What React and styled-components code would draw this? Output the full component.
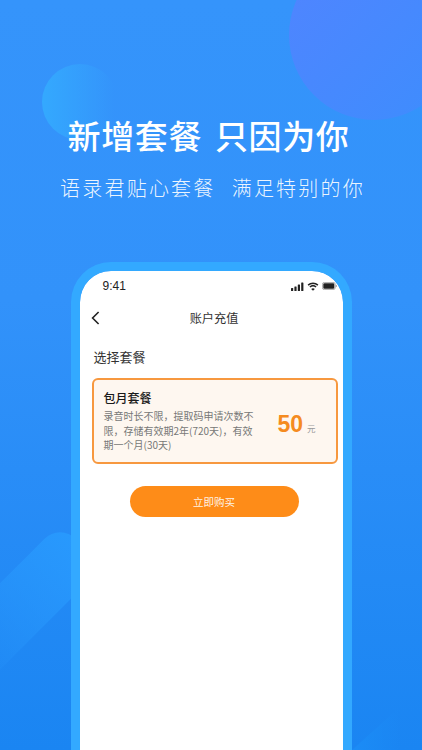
import React from 'react';
import styled, { createGlobalStyle } from 'styled-components';

const GlobalStyle = createGlobalStyle`
  html, body {
    margin: 0;
    padding: 0;
  }
  body {
    font-family: "Noto Sans CJK SC", "Liberation Sans", sans-serif;
  }
`;

const App = () => {
  return (
    <Page>
      <GlobalStyle />
      {/* background shapes */}
      <BigCircle />
      <SmallCircle />
      <LeftBand />
      <RightBand />

      <Title>新增套餐&nbsp;只因为你</Title>
      <Subtitle>语录君贴心套餐&nbsp;&nbsp;满足特别的你</Subtitle>

      <Phone>
        <StatusBar>
          <Time>9:41</Time>
          <StatusIcons>
            <svg width="13" height="9" viewBox="0 0 13 9">
              <rect x="0" y="6" width="2.2" height="3" rx="0.5" fill="#222" />
              <rect x="3.4" y="4.4" width="2.2" height="4.6" rx="0.5" fill="#222" />
              <rect x="6.8" y="2.4" width="2.2" height="6.6" rx="0.5" fill="#222" />
              <rect x="10.2" y="0.4" width="2.2" height="8.6" rx="0.5" fill="#222" />
            </svg>
            <svg width="12" height="9" viewBox="0 0 11 9" fill="none" stroke="#222" strokeWidth="1.5">
              <path d="M0.6 3.1C3.4 0.5 7.6 0.5 10.4 3.1" />
              <path d="M2.4 5C4.2 3.4 6.8 3.4 8.6 5" />
              <path d="M5.5 8.8L3.7 6.9C4.8 6 6.2 6 7.3 6.9Z" fill="#222" stroke="none" />
            </svg>
            <svg width="15" height="8" viewBox="0 0 15 8">
              <rect x="0.4" y="0.4" width="12.8" height="7.2" rx="2" fill="none" stroke="#888" strokeWidth="0.7" />
              <rect x="1.3" y="1.3" width="11" height="5.4" rx="1.2" fill="#222" />
              <path d="M13.9 2.8C14.5 3 14.8 3.5 14.8 4C14.8 4.5 14.5 5 13.9 5.2Z" fill="#888" />
            </svg>
          </StatusIcons>
        </StatusBar>

        <NavBar>
          <BackIcon width="9" height="14" viewBox="0 0 9 14" fill="none">
            <path d="M7.6 1L1.6 7L7.6 13" stroke="#222" strokeWidth="1.6" />
          </BackIcon>
          <NavTitle>账户充值</NavTitle>
        </NavBar>

        <SectionLabel>选择套餐</SectionLabel>

        <PlanCard>
          <PlanInfo>
            <PlanName>包月套餐</PlanName>
            <PlanDesc>录音时长不限，提取码申请次数不限，存储有效期2年(720天)，有效期一个月(30天)</PlanDesc>
          </PlanInfo>
          <Price>
            <Amount>50</Amount>
            <Unit>元</Unit>
          </Price>
        </PlanCard>

        <BuyButton>立即购买</BuyButton>
      </Phone>
    </Page>
  );
};

const Page = styled.div`
  position: relative;
  width: 422px;
  height: 750px;
  overflow: hidden;
  display: flex;
  flex-direction: column;
  align-items: center;
  background: linear-gradient(180deg, #3594fb 0%, #3292fa 40%, #1a85f2 100%);
`;

const BigCircle = styled.div`
  position: absolute;
  left: 289px;
  top: -50px;
  width: 170px;
  height: 170px;
  border-radius: 50%;
  background: linear-gradient(135deg, #5184ff 0%, #3d8dfd 100%);
`;

const SmallCircle = styled.div`
  position: absolute;
  left: 42px;
  top: 64px;
  width: 76px;
  height: 76px;
  border-radius: 50%;
  background: linear-gradient(90deg, #34a9fe 0%, rgba(52, 148, 252, 0) 95%);
`;

const LeftBand = styled.div`
  position: absolute;
  left: -89px;
  top: 585px;
  width: 200px;
  height: 61px;
  border-radius: 22px;
  transform: rotate(-45deg);
  background: linear-gradient(90deg, rgba(36, 146, 250, 0) 15%, #2899fd 100%);
`;

const RightBand = styled.div`
  position: absolute;
  left: 352px;
  top: 687px;
  width: 70px;
  height: 63px;
  clip-path: polygon(100% 0, 0 100%, 100% 100%);
  background: linear-gradient(90deg, #1b8cf6 0%, rgba(27, 140, 246, 0) 70%);
`;

const Title = styled.h1`
  position: relative;
  margin: 111px 5px 0 0;
  font-size: 33px;
  line-height: 48px;
  font-weight: 500;
  letter-spacing: 0.6px;
  word-spacing: 5px;
  color: #fff;
  white-space: nowrap;
`;

const Subtitle = styled.p`
  position: relative;
  margin: 14px 0 0 3px;
  font-size: 20px;
  line-height: 30px;
  font-weight: 300;
  letter-spacing: 2.2px;
  word-spacing: 1.5px;
  color: rgba(255, 255, 255, 0.92);
  white-space: nowrap;
`;

const Phone = styled.div`
  position: relative;
  box-sizing: border-box;
  width: 281px;
  flex: 1;
  margin-top: 59px;
  border: 9px solid #33a9ff;
  border-bottom: none;
  border-radius: 40px 40px 0 0;
  background: #fff;
  background-clip: padding-box;
  display: flex;
  flex-direction: column;
`;

const StatusBar = styled.div`
  height: 30px;
  padding: 0 6px 0 23px;
  display: flex;
  align-items: center;
  justify-content: space-between;
`;

const Time = styled.span`
  font-family: "Liberation Sans", sans-serif;
  font-size: 12px;
  color: #222;
`;

const StatusIcons = styled.div`
  display: flex;
  align-items: center;
  gap: 3px;
`;

const NavBar = styled.div`
  position: relative;
  height: 34px;
  padding-left: 6px;
  display: flex;
  align-items: center;
  justify-content: center;
`;

const BackIcon = styled.svg`
  position: absolute;
  left: 11px;
  top: 10px;
`;

const NavTitle = styled.span`
  font-size: 12.2px;
  color: #333;
`;

const SectionLabel = styled.div`
  margin: 12px 0 0 14px;
  font-size: 13px;
  line-height: 20px;
  color: #333;
`;

const PlanCard = styled.div`
  box-sizing: border-box;
  margin: 11px 5px 0 12px;
  height: 86px;
  padding: 0 20px 0 10px;
  border: 2px solid #f7983f;
  border-radius: 6px;
  background: #fef7f0;
  display: flex;
  align-items: center;
  justify-content: space-between;
`;

const PlanInfo = styled.div`
  width: 152px;
`;

const PlanName = styled.div`
  font-size: 12px;
  line-height: 17px;
  font-weight: 500;
  color: #1a1a1a;
`;

const PlanDesc = styled.div`
  margin-top: 3px;
  font-size: 10px;
  line-height: 14.5px;
  color: #777;
`;

const Price = styled.div`
  display: flex;
  align-items: baseline;
  gap: 4px;
  margin-top: 6px;
`;

const Amount = styled.span`
  font-family: "Liberation Sans", sans-serif;
  font-size: 23px;
  font-weight: 700;
  color: #f58b20;
`;

const Unit = styled.span`
  font-size: 8.5px;
  color: #999;
`;

const BuyButton = styled.div`
  align-self: center;
  margin: 22px 0 0 6px;
  width: 169px;
  height: 31px;
  border-radius: 16px;
  background: #fe8c18;
  color: rgba(255, 255, 255, 0.92);
  font-size: 10.5px;
  display: flex;
  align-items: center;
  justify-content: center;
`;

export default App;
